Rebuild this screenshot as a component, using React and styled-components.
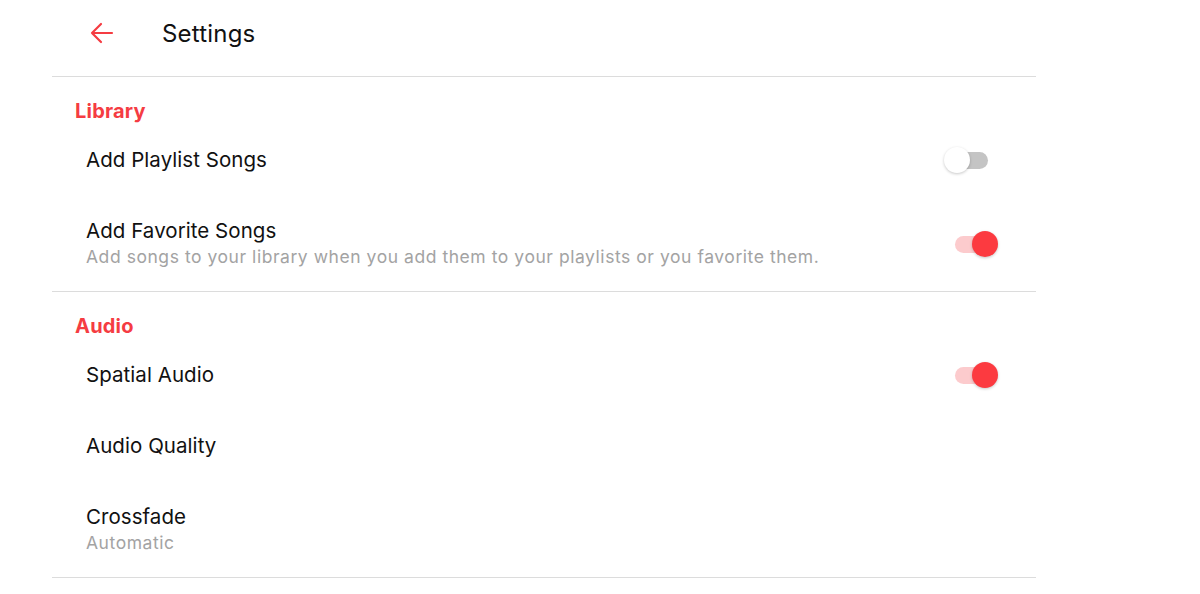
import styled, { createGlobalStyle } from "styled-components";

const GlobalStyle = createGlobalStyle`
  html, body {
    margin: 0;
    padding: 0;
    background: #ffffff;
    font-family: Inter, "Noto Sans", "Liberation Sans", sans-serif;
    -webkit-font-smoothing: antialiased;
  }
`;

const Page = styled.div`
  width: 984px;
  margin-left: 52px;
`;

const Header = styled.div`
  height: 77px;
  display: flex;
  align-items: center;
  border-bottom: 1px solid #dcdcdc;
  box-sizing: border-box;
  padding-bottom: 10px;
`;

const BackButton = styled.button`
  border: 0;
  background: none;
  padding: 0;
  margin-left: 37px;
  width: 26px;
  height: 26px;
  display: flex;
  align-items: center;
  justify-content: center;
  cursor: pointer;
`;

const Title = styled.div`
  margin-left: 47px;
  font-size: 24px;
  letter-spacing: 0.2px;
  color: #111;
`;

const Section = styled.div`
  padding-top: 22px;
  border-bottom: 1px solid #dcdcdc;
`;

const SectionLabel = styled.div`
  padding-left: 23px;
  font-size: 20px;
  line-height: 24px;
  font-weight: 700;
  letter-spacing: 0.2px;
  color: #f53c42;
`;

const Row = styled.div`
  display: flex;
  align-items: center;
  padding: 24px 38px 21px 34px;
`;

const RowText = styled.div`
  flex: 1;
`;

const RowTitle = styled.div`
  font-size: 20.5px;
  line-height: 26px;
  letter-spacing: 0.05px;
  color: #111;
`;

const RowSub = styled.div`
  font-size: 17.5px;
  line-height: 26px;
  letter-spacing: 0.55px;
  color: #a3a3a3;
`;

const Switch = styled.div`
  position: relative;
  width: 43px;
  height: 26px;
  flex-shrink: 0;
`;

const Track = styled.div`
  position: absolute;
  left: 0;
  right: 10px;
  top: 5px;
  height: 17px;
  border-radius: 9px;
  background: ${(p) => (p.$on ? "#fccbcd" : "#c4c4c4")};
`;

const Knob = styled.div`
  position: absolute;
  top: 0;
  left: ${(p) => (p.$on ? "17px" : "-11px")};
  width: 26px;
  height: 26px;
  border-radius: 50%;
  background: ${(p) => (p.$on ? "#fc3a40" : "#ffffff")};
  box-shadow: 0 1px 3px rgba(0, 0, 0, 0.22);
`;

const Toggle = ({ on }) => (
  <Switch>
    <Track $on={on} />
    <Knob $on={on} />
  </Switch>
);

const SettingRow = ({ title, sub, toggle }) => (
  <Row>
    <RowText>
      <RowTitle>{title}</RowTitle>
      {sub && <RowSub>{sub}</RowSub>}
    </RowText>
    {toggle !== undefined && <Toggle on={toggle} />}
  </Row>
);

export default function App() {
  return (
    <>
      <GlobalStyle />
      <Page>
        <Header>
          <BackButton aria-label="Back">
            <svg width="26" height="26" viewBox="0 0 26 26" fill="none">
              <path
                d="M23 13H3M12 4L3 13L12 22"
                stroke="#f53c42"
                strokeWidth="2.2"
                strokeLinecap="round"
                strokeLinejoin="round"
              />
            </svg>
          </BackButton>
          <Title>Settings</Title>
        </Header>
        <Section>
          <SectionLabel>Library</SectionLabel>
          <SettingRow title="Add Playlist Songs" toggle={false} />
          <SettingRow
            title="Add Favorite Songs"
            sub="Add songs to your library when you add them to your playlists or you favorite them."
            toggle={true}
          />
        </Section>
        <Section>
          <SectionLabel>Audio</SectionLabel>
          <SettingRow title="Spatial Audio" toggle={true} />
          <SettingRow title="Audio Quality" />
          <SettingRow title="Crossfade" sub="Automatic" />
        </Section>
      </Page>
    </>
  );
}
